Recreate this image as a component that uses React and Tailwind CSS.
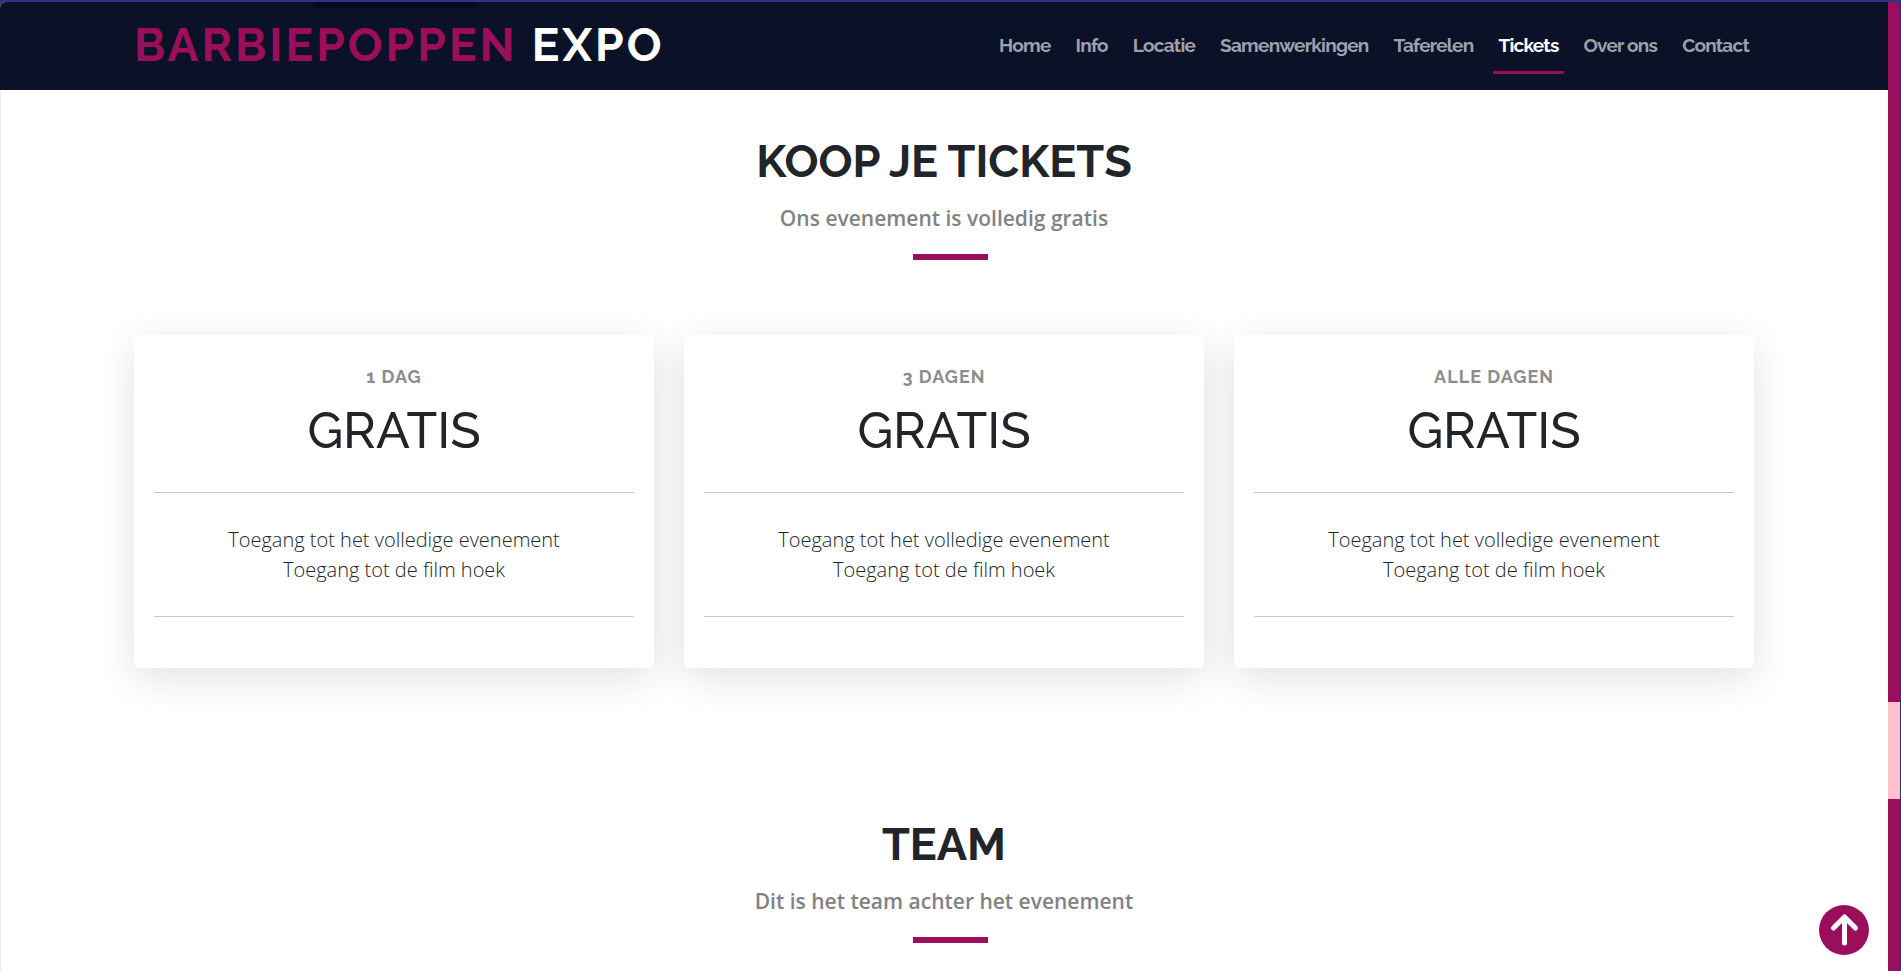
import React from "react";

const links = ["Home", "Info", "Locatie", "Samenwerkingen", "Taferelen", "Tickets", "Over ons", "Contact"];
const tickets = ["1 dag", "3 dagen", "Alle dagen"];

function SectionHeader({ title, subtitle }) {
  return (
    <header className="flex flex-col items-center text-center">
      <h2 className="font-['Raleway','Lato',sans-serif] text-[45px] leading-[54px] font-bold text-[#212529] uppercase">
        {title}
      </h2>
      <p className="mt-[13px] font-['Open_Sans',sans-serif] text-[21px] leading-8 font-semibold text-[#828282]">{subtitle}</p>
      <span className="mt-5 ml-3 h-1.5 w-[75px] bg-[#9b0e5b]" />
    </header>
  );
}

function TicketCard({ name }) {
  return (
    <article className="rounded-md bg-white px-5 pt-7 pb-[51px] text-center shadow-[0_10px_40px_rgba(0,0,0,0.12)]">
      <h3 className="font-['Raleway','Lato',sans-serif] text-lg leading-7 font-bold tracking-[1px] text-[#8c8c8c] uppercase oldstyle-nums">
        {name}
      </h3>
      <p className="mt-2.5 font-['Raleway','Lato',sans-serif] text-[50px] leading-[60px] font-medium text-[#212529]">GRATIS</p>
      <hr className="mt-[31px] border-t border-[#c6c6c6]" />
      <ul className="mt-8 mb-[31px] font-['Open_Sans',sans-serif] text-[20px] leading-[30px] font-light text-[#212529]">
        <li>Toegang tot het volledige evenement</li>
        <li>Toegang tot de film hoek</li>
      </ul>
      <hr className="border-t border-[#c6c6c6]" />
    </article>
  );
}

export default function App() {
  return (
    <div className="flex h-screen overflow-hidden border-t-2 border-r border-[#2f3389] bg-[#2f3389]">
      <div className="relative flex min-w-0 flex-1 flex-col rounded-tl-md border-l border-l-[#ececf0] bg-white">
        <header className="relative -ml-px rounded-tl-md bg-[#0b1126] px-[134px]">
          <span className="absolute top-0 left-[312px] h-1.5 w-[166px] rounded-b-lg bg-[#090a1f]" />
          <div className="flex h-[88px] items-center justify-between pb-0.5">
            <a href="#home" className="font-['Raleway','Lato',sans-serif] text-[46px] leading-[54px] font-bold tracking-[3px] whitespace-nowrap text-white">
              <span className="text-[#9b0e5b]">BARBIEPOPPEN</span> EXPO
            </a>
            <nav className="flex gap-[15px] font-['Raleway','Lato',sans-serif] text-[19px] leading-7 font-bold tracking-[-0.04em] whitespace-nowrap">
              {links.map((l) => (
                <a
                  key={l}
                  href={"#" + l.toLowerCase().replace(" ", "-")}
                  className={
                    l === "Tickets"
                      ? "border-y-3 border-y-transparent border-b-[#9b0e5b] px-[5px] py-3 text-white"
                      : "border-y-3 border-transparent px-[5px] py-3 text-[#9da0ae]"
                  }
                >
                  {l}
                </a>
              ))}
            </nav>
          </div>
        </header>
        <main className="pt-[45px] pr-[134px] pl-[133px]">
          <section>
            <SectionHeader title="Koop je tickets" subtitle="Ons evenement is volledig gratis" />
            <div className="mt-[75px] grid grid-cols-3 gap-[30px]">
              {tickets.map((t) => (
                <TicketCard key={t} name={t} />
              ))}
            </div>
          </section>
          <section className="mt-[150px]">
            <SectionHeader title="Team" subtitle="Dit is het team achter het evenement" />
          </section>
        </main>
        <button
          type="button"
          aria-label="Naar boven"
          className="absolute right-[19px] bottom-4 flex size-[50px] items-center justify-center rounded-full bg-[#9b0e5b]"
        >
          <svg viewBox="0 0 50 50" className="size-[50px]" fill="none" stroke="white" strokeWidth="5" strokeLinecap="round" strokeLinejoin="round">
            <path d="M25.500 38V13M14.500 23L25.500 12L36.500 23" />
          </svg>
        </button>
      </div>
      <div className="flex w-3 flex-col rounded-tr-md bg-[#9b0e5b]">
        <div className="grow-[700]" />
        <div className="grow-[97] bg-[#ffc0cb]" />
        <div className="grow-[172]" />
      </div>
    </div>
  );
}
